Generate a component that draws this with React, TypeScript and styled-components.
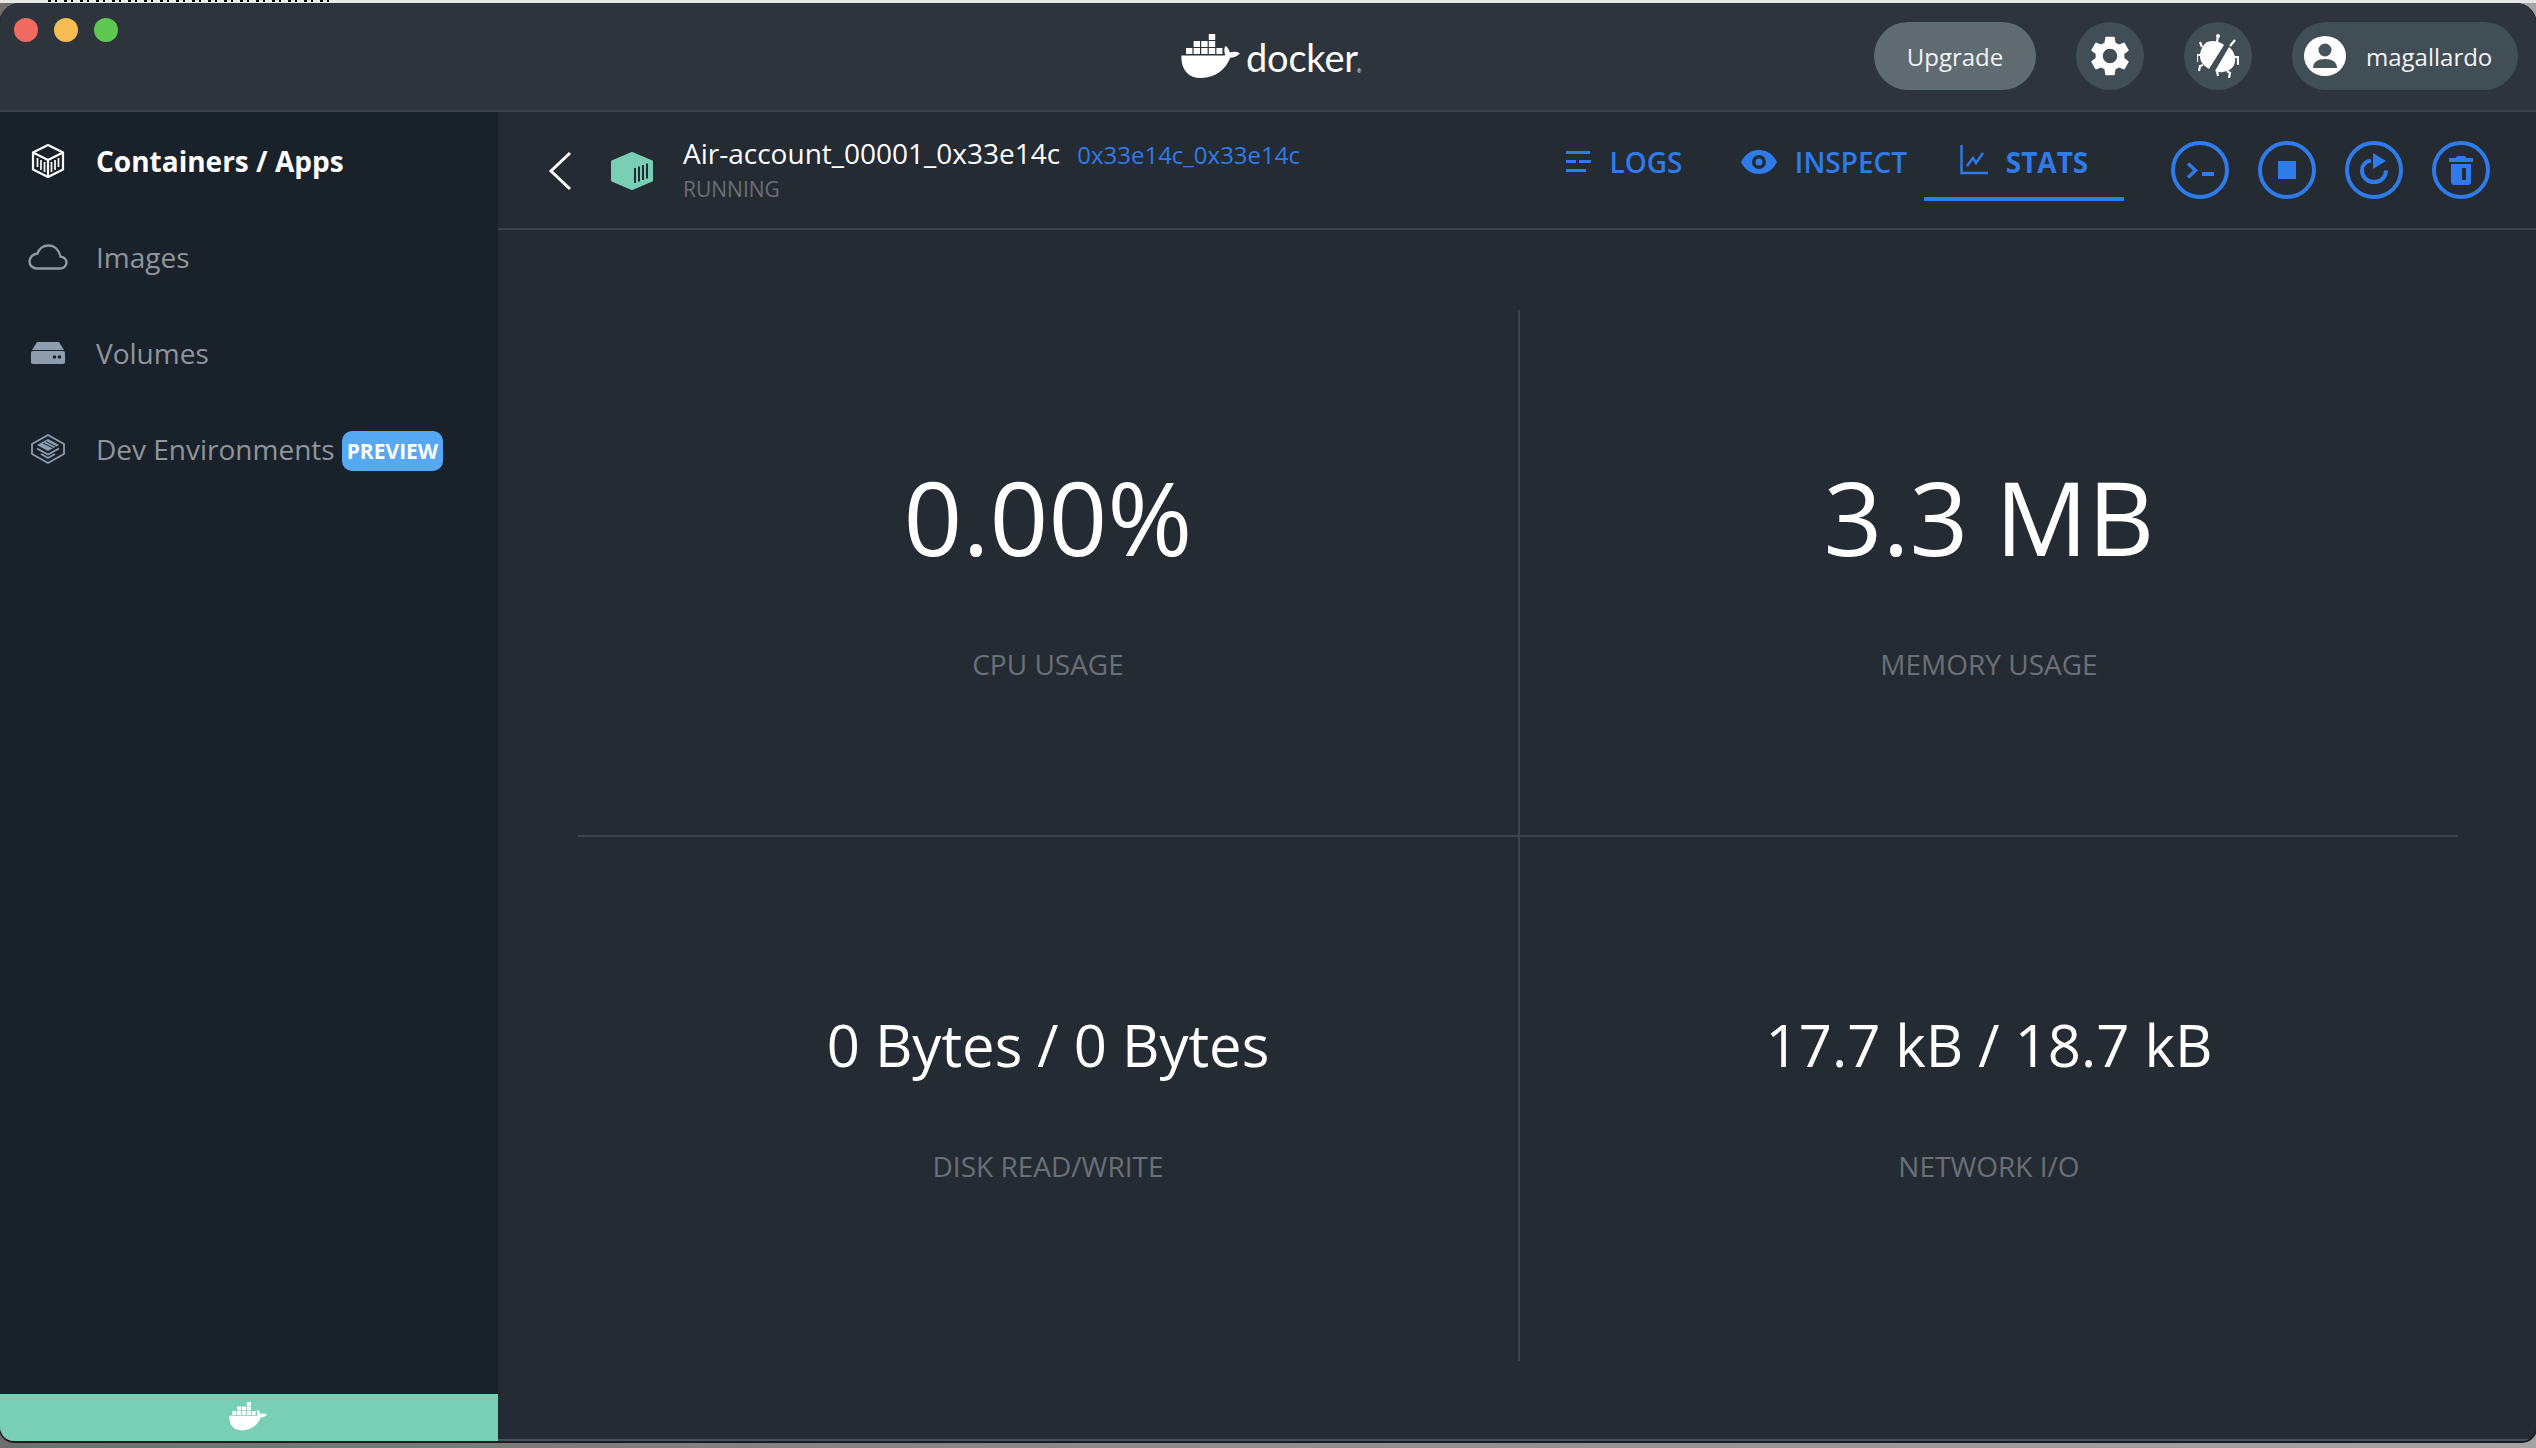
import { createGlobalStyle, styled } from 'styled-components'
import { MdSettings } from 'react-icons/md'

const GlobalStyle = createGlobalStyle`
  html, body {
    margin: 0;
    padding: 0;
    background: #7a7a7a;
    font-family: "Open Sans", "Liberation Sans", sans-serif;
  }
  * { box-sizing: border-box; }
`

const Desktop = styled.div`
  position: relative;
  width: 2536px;
  height: 1448px;
  padding-top: 3px;
  overflow: hidden;
  background: linear-gradient(90deg, #6e6e6e 0, #8c8c8c 1200px, #a4a4a4 2536px);
`

const BehindStrip = styled.div`
  position: absolute;
  left: 0;
  top: 0;
  width: 100%;
  height: 3px;
  background: #e6e6e6;

  &::before {
    content: "";
    position: absolute;
    left: 48px;
    top: 0;
    width: 288px;
    height: 2px;
    background: repeating-linear-gradient(90deg, #111 0 3px, #eee 3px 7px, #111 7px 9px, #eee 9px 16px);
  }
`

const Window = styled.div`
  position: relative;
  display: flex;
  flex-direction: column;
  height: 1438px;
  border-radius: 20px 20px 14px 14px;
  overflow: hidden;
  background: #242b33;
  box-shadow: 0 1px 0 1px #1c1c1c;
`

const TitleBar = styled.header`
  position: relative;
  display: flex;
  align-items: center;
  justify-content: flex-end;
  flex: 0 0 109px;
  padding: 0 18px 1px 0;
  background: #2d343c;
  border-bottom: 2px solid #3a4149;
`

const Lights = styled.div`
  position: absolute;
  left: 14px;
  top: 15px;
  display: flex;
  gap: 16px;
`

const Light = styled.span<{ $color: string }>`
  width: 24px;
  height: 24px;
  border-radius: 50%;
  background: ${(p) => p.$color};
`

const Logo = styled.div`
  position: absolute;
  left: 1181px;
  top: 31px;
  display: flex;
  align-items: flex-end;
  gap: 3px;
  color: #fff;
`

const LogoWord = styled.span`
  font-family: "Lato", "Open Sans", sans-serif;
  font-size: 38px;
  font-weight: 400;
  line-height: 38px;
  letter-spacing: -0.2px;
  transform: translateY(-2px);
`

const LogoMark = styled.span`
  margin-left: -4px;
  font-size: 5px;
  line-height: 14px;
`

const Actions = styled.div`
  display: flex;
  align-items: center;
  gap: 40px;
`

const Pill = styled.div<{ $bg: string }>`
  display: flex;
  align-items: center;
  height: 68px;
  border-radius: 34px;
  background: ${(p) => p.$bg};
  color: #f2f4f5;
  font-size: 24px;
`

const UpgradePill = styled(Pill)`
  justify-content: center;
  width: 162px;
`

const RoundPill = styled(Pill)`
  justify-content: center;
  width: 68px;
`

const UserPill = styled(Pill)`
  width: 226px;
  padding-left: 12px;
  gap: 20px;
`

const Body = styled.div`
  display: flex;
  flex: 1;
  min-height: 0;
`

const Sidebar = styled.aside`
  display: flex;
  flex-direction: column;
  flex: 0 0 498px;
  background: #19222b;
`

const NavList = styled.nav`
  display: flex;
  flex-direction: column;
  flex: 1;
  padding-top: 1px;
`

const NavItem = styled.div<{ $active?: boolean }>`
  display: flex;
  align-items: center;
  height: 96px;
  padding-left: 28px;
  color: ${(p) => (p.$active ? '#fff' : '#8f959b')};
  font-size: 28px;
  font-weight: ${(p) => (p.$active ? 700 : 400)};
`

const NavIcon = styled.span`
  display: flex;
  justify-content: center;
  width: 40px;
  margin-right: 28px;
`

const Badge = styled.span`
  margin: 3px 0 0 7px;
  padding: 0 5px;
  height: 40px;
  border-radius: 10px;
  background: #57a8f2;
  color: #fff;
  font-size: 21px;
  font-weight: 700;
  line-height: 40px;
`

const StatusBar = styled.footer`
  display: flex;
  justify-content: center;
  align-items: center;
  flex: 0 0 47px;
  padding-bottom: 2px;
  background: #79cfb4;
`

const Main = styled.main`
  display: flex;
  flex-direction: column;
  flex: 1;
  min-width: 0;
  background: #242b33;
  border-bottom: 2px solid #48525a;
`

const DetailBar = styled.div`
  display: flex;
  align-items: center;
  flex: 0 0 118px;
  border-bottom: 2px solid #3a4149;
  padding-left: 50px;
`

const BackButton = styled.span`
  display: flex;
  margin-right: 38px;
  margin-top: 2px;
`

const ContainerIcon = styled.span`
  display: flex;
  margin-right: 29px;
  margin-top: 2px;
`

const Heading = styled.div`
  display: flex;
  flex-direction: column;
  flex: 0 0 841px;
  margin-top: -4px;
`

const NameRow = styled.div`
  display: flex;
  align-items: baseline;
  gap: 17px;
`

const Name = styled.span`
  color: #fff;
  font-size: 28px;
  line-height: 36px;
`

const IdLink = styled.span`
  color: #2f7bea;
  font-size: 24px;
`

const Status = styled.span`
  margin-top: 5px;
  color: #6a7076;
  font-size: 21px;
  line-height: 26px;
`

const Tabs = styled.div`
  display: flex;
  align-self: stretch;
`

const Tab = styled.div<{ $active?: boolean }>`
  display: flex;
  align-items: center;
  justify-content: center;
  gap: 18px;
  width: 200px;
  height: 88px;
  margin-top: 1px;
  padding-top: 14px;
  border-bottom: 4px solid ${(p) => (p.$active ? '#2f7bea' : 'transparent')};
  color: #2f7bea;
  font-size: 28px;
  font-weight: ${(p) => (p.$active ? 700 : 600)};
`

const RoundButtons = styled.div`
  display: flex;
  gap: 29px;
  margin-left: 47px;
`

const RoundButton = styled.span`
  display: flex;
  align-items: center;
  justify-content: center;
  width: 58px;
  height: 58px;
  border: 4px solid #2f7bea;
  border-radius: 50%;
`

const StatsArea = styled.section`
  flex: 1;
  min-height: 0;
  padding: 80px 78px 78px 80px;
`

const StatsGrid = styled.div`
  display: grid;
  grid-template-columns: 942px 938px;
  grid-template-rows: 527px 524px;
  height: 100%;
`

const StatCell = styled.div<{ $right?: boolean; $bottom?: boolean }>`
  display: flex;
  flex-direction: column;
  align-items: center;
  padding-top: ${(p) => (p.$bottom ? 168 : 144)}px;
  border-bottom: ${(p) => (p.$bottom ? 'none' : '2px solid #3e454c')};
  border-right: ${(p) => (p.$right ? 'none' : '2px solid #3e454c')};
`

const StatValue = styled.div<{ $big?: boolean }>`
  height: ${(p) => (p.$big ? 124 : 80)}px;
  color: #fff;
  font-size: ${(p) => (p.$big ? 103 : 58)}px;
  line-height: ${(p) => (p.$big ? 124 : 80)}px;
  white-space: nowrap;
`

const StatLabel = styled.div<{ $big?: boolean }>`
  margin-top: ${(p) => (p.$big ? 68 : 63)}px;
  color: #6a7076;
  font-size: 28px;
  line-height: 36px;
`

const Whale = ({ width, color = '#fff' }: { width: number; color?: string }) => (
  <svg width={width} viewBox="0 0 62 44" fill={color} style={{ display: 'block' }}>
    <path d="M0.5 21.5h41c1.2 0 2-.2 2.8-.6-1.2-2.4-1.4-6.2-.2-8.4.2-.4.6-.5.9-.2 2 1.4 3.4 3.7 3.7 6.2 2.6-1 6.8-1.2 9.6.4.5.3.5.8.1 1.2-2.4 2.4-5.5 3.5-9.2 3.7C45 35 35 44 20 44 7 44-.4 35 .5 21.5z" />
    <rect x="5" y="14" width="6.4" height="6" />
    <rect x="12.6" y="14" width="6.4" height="6" />
    <rect x="20.2" y="14" width="6.4" height="6" />
    <rect x="27.8" y="14" width="6.4" height="6" />
    <rect x="35.4" y="14" width="6" height="6" />
    <rect x="12.6" y="7" width="6.4" height="6" />
    <rect x="20.2" y="7" width="6.4" height="6" />
    <rect x="27.8" y="7" width="6.4" height="6" />
    <rect x="27.8" y="0" width="6.4" height="6" />
  </svg>
)

const Crate = ({ color, stroke }: { color: string; stroke: number }) => (
  <svg width="36" height="36" viewBox="0 0 36 36" fill="none" stroke={color} strokeWidth={stroke}>
    <path d="M18 2 33 9.5v17L18 34 3 26.5v-17z" strokeLinejoin="round" />
    <path d="M3 9.5 18 17 33 9.5M18 17v17" />
    <path d="M7.5 15v9M11 17v10M14.5 19v10M21.5 19v10M25 17v10M28.5 15v9" strokeWidth="1.7" />
  </svg>
)

const Cloud = () => (
  <svg width="40" height="26" viewBox="0 0 40 26" fill="none" stroke="#8f9aa5" strokeWidth="2.4">
    <path d="M9 24.5h23c3.6 0 6.5-2.6 6.5-6 0-3.2-2.7-5.8-6-6C31 6 26.5 1.5 20.5 1.5c-5.3 0-9.5 3.3-11 8C4.8 10 1.5 13.5 1.5 17.5c0 4 3.3 7 7.5 7z" />
  </svg>
)

const Drive = () => (
  <svg width="34" height="22" viewBox="0 0 34 22" fill="#8f9eae">
    <path d="M6 0h22l5 8H1zM2 9h30c1.1 0 2 .9 2 2v9c0 1.1-.9 2-2 2H2c-1.1 0-2-.9-2-2v-9c0-1.1.9-2 2-2z" />
    <circle cx="23.5" cy="15" r="1.8" fill="#19222b" />
    <circle cx="28.5" cy="15" r="1.8" fill="#19222b" />
  </svg>
)

const DevStack = () => (
  <svg width="34" height="30" viewBox="0 0 34 30" fill="none" stroke="#8f9eae" strokeWidth="1.8">
    <path d="M17 1 33 10v10L17 29 1 20V10z" strokeLinejoin="round" />
    <path d="M17 5 28 11 17 17 6 11z" fill="#8f9eae" stroke="none" />
    <path d="M6 14.5 17 20.5 28 14.5M10 20 17 24 24 20" />
    <path d="M12 9 22 14M15 7.5 25 12.5" stroke="#19222b" strokeWidth="1" />
  </svg>
)

const Bug = () => (
  <svg width="42" height="44" viewBox="0 0 42 44" fill="none" stroke="#fff" strokeWidth="2.2">
    <path d="M10 8c6-2 12-1 17 3L12 35c-5-3-9-7-9-13 0-6 3-11 7-14z" fill="#fff" stroke="none" />
    <path d="M32 13c5 4 7 10 6 15-1 6-6 9-12 10-3 .5-6 0-8-1z" fill="#fff" stroke="none" />
    <path d="M20 8l1-6M5 13 3 8M4 21H0v7M6 31l-3 1-1 5M33 12l5-6M38 23h3v8M30 37l3 2-1 5M20 37l1 5" />
    <circle cx="21" cy="2" r="2" fill="#fff" stroke="none" />
  </svg>
)

const Avatar = () => (
  <svg width="42" height="40" viewBox="0 0 42 40" style={{ flex: 'none' }}>
    <ellipse cx="21" cy="20" rx="21" ry="20" fill="#fff" />
    <ellipse cx="21" cy="14" rx="6.5" ry="6.5" fill="#47545c" />
    <path d="M9 32c0-6 5-9 12-9s12 3 12 9z" fill="#47545c" />
  </svg>
)

const Chevron = () => (
  <svg width="24" height="40" viewBox="0 0 24 40" fill="none" stroke="#fff" strokeWidth="3">
    <path d="M22 2 3 20l19 18" />
  </svg>
)

const GreenBox = () => (
  <svg width="44" height="38" viewBox="0 0 44 38">
    <path d="M22 1 42 9.5v19L22 37 2 28.5v-19z" fill="#79cfb4" stroke="#79cfb4" strokeLinejoin="round" strokeWidth="2" />
    <path d="M25 16v15M29 14.5v15M33 13v15M37 11.5v15" stroke="#242b33" strokeWidth="2" />
  </svg>
)

const LogsIcon = () => (
  <svg width="26" height="22" viewBox="0 0 26 22" fill="#2f7bea">
    <rect x="0" y="0" width="24" height="3" />
    <rect x="0" y="9" width="10" height="3" />
    <rect x="13" y="9" width="12" height="3" />
    <rect x="0" y="18" width="20" height="3" />
  </svg>
)

const EyeIcon = () => (
  <svg width="36" height="24" viewBox="0 0 36 24">
    <path fillRule="evenodd" d="M0 12C4 4 10 0 18 0s14 4 18 12c-4 8-10 12-18 12S4 20 0 12zm18-7a7 7 0 1 0 0 14 7 7 0 0 0 0-14z" fill="#2f7bea" />
    <circle cx="18" cy="12" r="3.5" fill="#2f7bea" />
  </svg>
)

const ChartIcon = () => (
  <svg width="28" height="30" viewBox="0 0 28 30" fill="none" stroke="#2f7bea" strokeWidth="2.4" style={{ marginTop: -4 }}>
    <path d="M1.5 0v28H28" />
    <path d="M7 21l6-8 3 5 7-10" />
  </svg>
)

const TerminalIcon = () => (
  <svg width="28" height="17" viewBox="0 0 28 17" fill="none" stroke="#2f7bea" strokeWidth="3.4">
    <path d="M2 1.5l7.500 7-7.500 7" />
    <rect x="16" y="10" width="12" height="4" fill="#2f7bea" stroke="none" />
  </svg>
)

const StopIcon = () => (
  <svg width="18" height="18" viewBox="0 0 18 18">
    <rect width="18" height="18" fill="#2f7bea" />
  </svg>
)

const RestartIcon = () => (
  <svg width="28" height="31" viewBox="0 0 28 31" fill="none" stroke="#2f7bea" strokeWidth="4" style={{ marginTop: -4 }}>
    <path d="M11 7.5C5.5 8.5 2 12 2 17.5c0 6.5 5.3 11.5 12 11.5s12-5 12-11.5" />
    <path d="M13 0 26 8 13 16z" fill="#2f7bea" stroke="none" />
  </svg>
)

const TrashIcon = () => (
  <svg width="24" height="29" viewBox="0 0 24 29" fill="#2f7bea">
    <rect x="7" y="0" width="10" height="3" rx="1.5" />
    <rect x="0" y="2" width="24" height="4" />
    <path fillRule="evenodd" d="M2 8h20v18c0 1.5-1 3-3 3H5c-2 0-3-1.5-3-3zM13 12v12h4V12z" />
  </svg>
)

const stats = [
  { value: '0.00%', label: 'CPU USAGE', big: true },
  { value: '3.3 MB', label: 'MEMORY USAGE', big: true, right: true },
  { value: '0 Bytes / 0 Bytes', label: 'DISK READ/WRITE' },
  { value: '17.7 kB / 18.7 kB', label: 'NETWORK I/O', right: true },
]

export default function App() {
  return (
    <Desktop>
      <GlobalStyle />
      <BehindStrip />
      <Window>
        <TitleBar>
          <Lights>
            <Light $color="#f06a60" />
            <Light $color="#f5bd4f" />
            <Light $color="#5fc853" />
          </Lights>
          <Logo>
            <Whale width={62} />
            <LogoWord>docker</LogoWord>
            <LogoMark>®</LogoMark>
          </Logo>
          <Actions>
            <UpgradePill $bg="#5f6b71">Upgrade</UpgradePill>
            <RoundPill $bg="#414e56"><MdSettings size={48} color="#fff" /></RoundPill>
            <RoundPill $bg="#414e56"><Bug /></RoundPill>
            <UserPill $bg="#414e56">
              <Avatar />
              magallardo
            </UserPill>
          </Actions>
        </TitleBar>
        <Body>
          <Sidebar>
            <NavList>
              <NavItem $active>
                <NavIcon><Crate color="#fff" stroke={2.2} /></NavIcon>
                Containers / Apps
              </NavItem>
              <NavItem>
                <NavIcon><Cloud /></NavIcon>
                Images
              </NavItem>
              <NavItem>
                <NavIcon><Drive /></NavIcon>
                Volumes
              </NavItem>
              <NavItem>
                <NavIcon><DevStack /></NavIcon>
                Dev Environments
                <Badge>PREVIEW</Badge>
              </NavItem>
            </NavList>
            <StatusBar>
              <Whale width={40} />
            </StatusBar>
          </Sidebar>
          <Main>
            <DetailBar>
              <BackButton><Chevron /></BackButton>
              <ContainerIcon><GreenBox /></ContainerIcon>
              <Heading>
                <NameRow>
                  <Name>Air-account_00001_0x33e14c</Name>
                  <IdLink>0x33e14c_0x33e14c</IdLink>
                </NameRow>
                <Status>RUNNING</Status>
              </Heading>
              <Tabs>
                <Tab><LogsIcon />LOGS</Tab>
                <Tab><EyeIcon />INSPECT</Tab>
                <Tab $active><ChartIcon />STATS</Tab>
              </Tabs>
              <RoundButtons>
                <RoundButton><TerminalIcon /></RoundButton>
                <RoundButton><StopIcon /></RoundButton>
                <RoundButton><RestartIcon /></RoundButton>
                <RoundButton><TrashIcon /></RoundButton>
              </RoundButtons>
            </DetailBar>
            <StatsArea>
              <StatsGrid>
                {stats.map((s, i) => (
                  <StatCell key={s.label} $right={s.right} $bottom={i > 1}>
                    <StatValue $big={s.big}>{s.value}</StatValue>
                    <StatLabel $big={s.big}>{s.label}</StatLabel>
                  </StatCell>
                ))}
              </StatsGrid>
            </StatsArea>
          </Main>
        </Body>
      </Window>
    </Desktop>
  )
}
